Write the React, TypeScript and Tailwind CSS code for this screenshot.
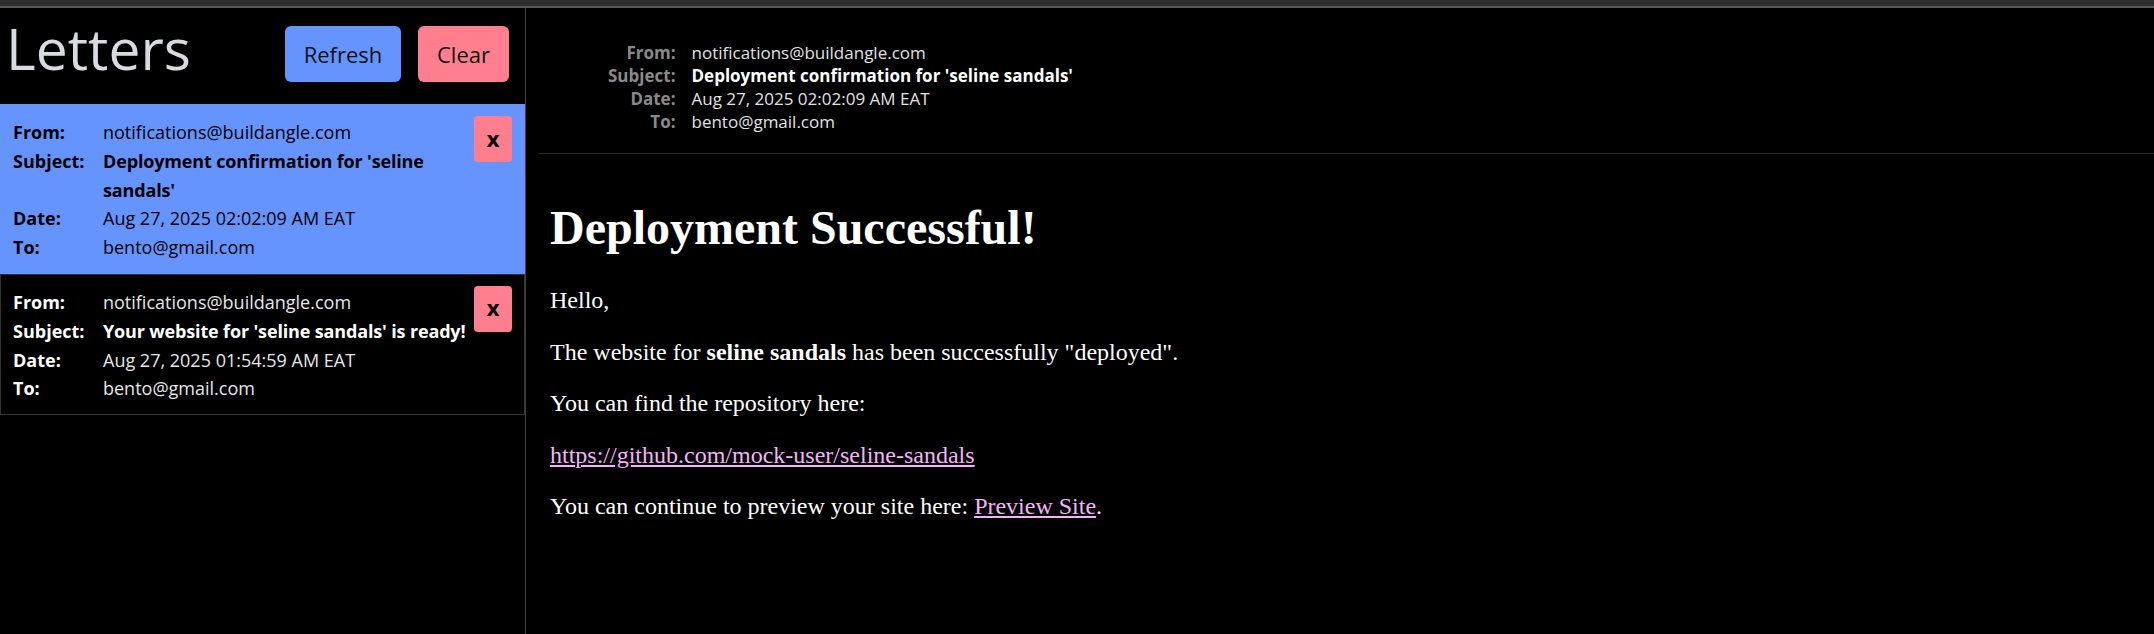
import React from "react";

type Letter = {
  from: string;
  subject: string;
  date: string;
  to: string;
  selected?: boolean;
};

const letters: Letter[] = [
  {
    from: "notifications@buildangle.com",
    subject: "Deployment confirmation for 'seline sandals'",
    date: "Aug 27, 2025 02:02:09 AM EAT",
    to: "bento@gmail.com",
    selected: true,
  },
  {
    from: "notifications@buildangle.com",
    subject: "Your website for 'seline sandals' is ready!",
    date: "Aug 27, 2025 01:54:59 AM EAT",
    to: "bento@gmail.com",
  },
];

function LetterItem({ l }: { l: Letter }) {
  const sel = !!l.selected;
  return (
    <div
      className={
        sel
          ? "flex items-start bg-[#6694ff] pl-[13px] pr-[13px] pt-[13px] pb-[12px] text-black"
          : "flex items-start border border-[#333333] pl-[12px] pr-[12px] pt-[12px] pb-[11px] text-white"
      }
    >
      <div className="grid flex-1 min-w-0 grid-cols-[90px_1fr] pt-[1px] text-[18px] leading-[28.8px]">
        <div className="font-bold">From:</div>
        <div className={sel ? "text-black" : "text-[#e6e6e6]"}>{l.from}</div>
        <div className="font-bold">Subject:</div>
        <div className="font-bold tracking-[-0.15px]">{l.subject}</div>
        <div className="font-bold">Date:</div>
        <div className={sel ? "text-black" : "text-[#e6e6e6]"}>{l.date}</div>
        <div className="font-bold">To:</div>
        <div className={sel ? "text-black" : "text-[#e6e6e6]"}>{l.to}</div>
      </div>
      <button className="-mt-[1px] flex h-[46px] w-[38px] shrink-0 items-center justify-center rounded-[4px] bg-[#ff7f8e] pb-[3px] text-[22px] font-bold leading-none text-black">
        x
      </button>
    </div>
  );
}

const labelCls = "text-right font-bold text-[#8a8a8a]";

export default function App() {
  return (
    <div
      className="flex h-screen flex-col overflow-hidden bg-black"
      style={{ fontFamily: '"Open Sans", "Noto Sans", sans-serif' }}
    >
      <div className="h-[6px] shrink-0 bg-[#2e2e2e]" />
      <div className="h-[2px] shrink-0 bg-[#565656]" />
      <div className="flex min-h-0 flex-1">
        {/* Sidebar */}
        <aside className="flex w-[526px] shrink-0 flex-col border-r border-[#404040]">
          <div className="flex h-[96px] shrink-0 items-start justify-between pl-[6px] pr-[16px]">
            <h1 className="mt-[2px] text-[57px] leading-[76px] text-[#d8dbe0]">Letters</h1>
            <div className="mt-[18px] flex gap-[17px]">
              <button className="h-[56px] w-[116px] rounded-[6px] bg-[#6694ff] text-[22px] text-[#111]">
                Refresh
              </button>
              <button className="h-[56px] w-[91px] rounded-[6px] bg-[#ff7f8e] text-[22px] text-[#111]">
                Clear
              </button>
            </div>
          </div>
          <div className="flex flex-col">
            {letters.map((l, i) => (
              <LetterItem key={i} l={l} />
            ))}
          </div>
        </aside>

        {/* Reader */}
        <main className="min-w-0 flex-1 pl-[12px]">
          <div className="border-b border-[#2b2b2b] pb-[20px] pt-[33px]">
            <div className="ml-[70px] grid w-max grid-cols-[auto_auto] gap-x-[16px] text-[17px] leading-[23px]">
              <div className={labelCls}>From:</div>
              <div className="text-[#e2e2e2]">notifications@buildangle.com</div>
              <div className={labelCls}>Subject:</div>
              <div className="font-bold text-white">Deployment confirmation for 'seline sandals'</div>
              <div className={labelCls}>Date:</div>
              <div className="text-[#e2e2e2]">Aug 27, 2025 02:02:09 AM EAT</div>
              <div className={labelCls}>To:</div>
              <div className="text-[#e2e2e2]">bento@gmail.com</div>
            </div>
          </div>
          <div
            className="ml-[12px] pt-[46px] text-white"
            style={{ fontFamily: '"Liberation Serif", "Times New Roman", serif' }}
          >
            <h2 className="mb-[32px] text-[48px] font-bold leading-[55px]">Deployment Successful!</h2>
            <p className="mb-[24.5px] text-[24px] leading-[27px]">Hello,</p>
            <p className="mb-[24.5px] text-[24px] leading-[27px]">
              The website for <b>seline sandals</b> has been successfully "deployed".
            </p>
            <p className="mb-[24.5px] text-[24px] leading-[27px]">You can find the repository here:</p>
            <p className="mb-[24.5px] text-[24px] leading-[27px]">
              <a href="#" className="text-[#f2b5f5] underline">
                https://github.com/mock-user/seline-sandals
              </a>
            </p>
            <p className="mb-[24.5px] text-[24px] leading-[27px]">
              You can continue to preview your site here:{" "}
              <a href="#" className="text-[#f2b5f5] underline">
                Preview Site
              </a>
              .
            </p>
          </div>
        </main>
      </div>
    </div>
  );
}
